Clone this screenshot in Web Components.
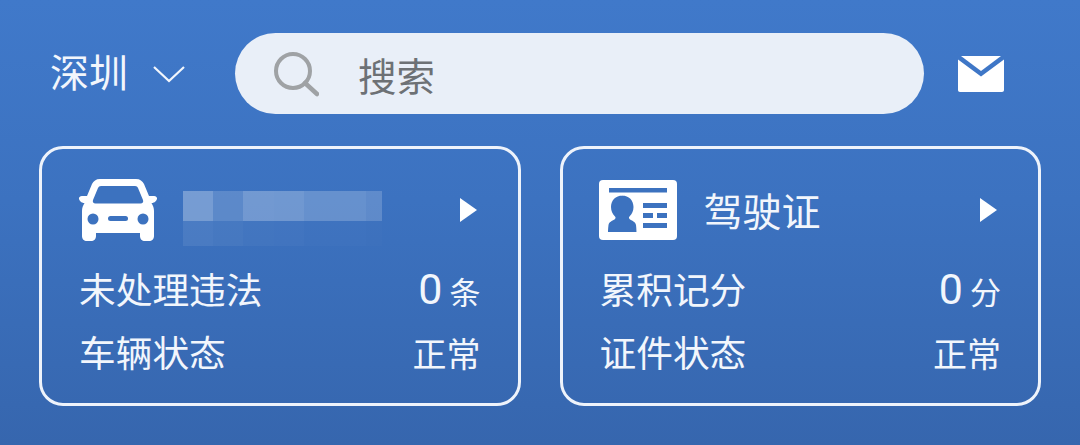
<!DOCTYPE html>
<html lang="zh">
<head>
<meta charset="utf-8">
<title>Home</title>
<style>
html, body { margin: 0; height: 445px; overflow: hidden; }
body {
    background: linear-gradient(180deg, #4079ca 0%, #3c72c0 45%, #3666ae 100%);
    font-family: "Liberation Sans", "Noto Sans CJK SC", sans-serif;
    color: #fff;
}
.cards { display: flex; gap: 39px; padding: 0 39px; }
</style>
</head>
<body>
<top-bar city="深圳" placeholder="搜索"></top-bar>
<div class="cards">
    <info-card>
        <svg slot="icon" width="80" height="64" viewBox="0 0 80 64"><path fill="#fff" d="M22 1h36c4 0 6.500 2 8 5l5 12h5c2 0 3.500 1.500 3 3s-2 4-5.500 4c1.500 2.500 2.500 5 2.500 8v25c0 3-2 5-5 5h-4c-3 0-5-2-5-5v-3H18v3c0 3-2 5-5 5H9c-3 0-5-2-5-5V33c0-3 1-5.500 2.500-8C3 25 1.500 22.500 1 21s1-3 3-3h5l5-12c1.500-3 4-5 8-5z"/><path fill="#3c72bf" d="M23 8h34c1.500 0 2.500.8 3 2l5 12c.7 2-.3 3.500-2.500 3.500h-45C15.300 25.500 14.300 24 15 22l5-12c.5-1.200 1.500-2 3-2z"/><circle cx="15" cy="41" r="5.500" fill="#3c72bf"/><circle cx="65" cy="41" r="5.500" fill="#3c72bf"/><rect x="30" y="38" width="20" height="5" rx="2.500" fill="#3c72bf"/></svg>
        <blur-plate slot="title"></blur-plate>
        <info-row label="未处理违法" value="0" unit="条"></info-row>
        <info-row label="车辆状态" value="正常"></info-row>
    </info-card>
    <info-card>
        <svg slot="icon" width="78" height="60" viewBox="0 0 78 60"><rect width="78" height="60" rx="4" fill="#fff"/><rect x="10" y="8" width="58" height="4.500" fill="#3c72bf"/><path fill="#3c72bf" d="M23 15.500c7 0 11.500 5 11.500 11.500 0 4-1.500 7-4 9.500-1 1-.5 2 .5 3 2.500 1.500 5.500 2.500 6 5.500.4 3 .5 7 .5 7H9s.1-4 .5-7c.5-3 3.500-4 6-5.500 1-1 1.500-2 .5-3-2.500-2.500-4-5.500-4-9.500 0-6.500 4.500-11.500 11.500-11.500z"/><rect x="44" y="23" width="24" height="5" fill="#3c72bf"/><rect x="44" y="33" width="10" height="5" fill="#3c72bf"/><rect x="58" y="33" width="10" height="5" fill="#3c72bf"/><rect x="44" y="43" width="24" height="5" fill="#3c72bf"/></svg>
        <span slot="title">驾驶证</span>
        <info-row label="累积记分" value="0" unit="分"></info-row>
        <info-row label="证件状态" value="正常"></info-row>
    </info-card>
</div>

<script>
class TopBar extends HTMLElement {
    constructor() {
        super();
        this.attachShadow({ mode: 'open' });
        this.shadowRoot.innerHTML = `
            <style>
                :host {
                    display: flex;
                    align-items: center;
                    height: 81px;
                    padding: 33px 76px 32px 50px;
                    font-family: "Liberation Sans", "Noto Sans CJK SC", sans-serif;
                }
                .city {
                    font-size: 39px;
                    line-height: 81px;
                    color: #f2f6fc;
                    width: 78px;
                    flex: none;
                }
                .chevron { margin-left: 24px; margin-right: 49px; flex: none; }
                .search {
                    flex: 1;
                    height: 81px;
                    display: flex;
                    align-items: center;
                    padding-left: 38px;
                    border-radius: 40.5px;
                    background: #e9eff8;
                    color: #6d7175;
                    font-size: 38.500px;
                }
                .search svg { margin-right: 39px; flex: none; }
                .mail { margin-left: 34px; flex: none; }
            </style>
            <span class="city">${this.getAttribute('city')}</span>
            <svg class="chevron" width="34" height="20" viewBox="0 0 34 20"><path d="M2 3l15 14L32 3" fill="none" stroke="#f2f6fc" stroke-width="2.200"/></svg>
            <div class="search">
                <svg width="46" height="46" viewBox="0 0 46 46"><circle cx="20" cy="20" r="17" fill="none" stroke="#9fa2a5" stroke-width="4"/><path d="M32 32l12 11" fill="none" stroke="#9fa2a5" stroke-width="4.500" stroke-linecap="round"/></svg>
                <span>${this.getAttribute('placeholder')}</span>
            </div>
            <svg class="mail" width="46" height="36" viewBox="0 0 46 36"><path fill="#fff" d="M3 0h40L23 15z"/><path fill="#fff" d="M0 3.500l23 17 23-17V34c0 1.200-.8 2-2 2H2c-1.200 0-2-.8-2-2z"/></svg>
        `;
    }
}

class BlurPlate extends HTMLElement {
    constructor() {
        super();
        this.attachShadow({ mode: 'open' });
        // mosaic over the hidden plate number
        const top = [[30, .3], [30, .17], [31, .28], [30, .27], [31, .22], [31, .22], [16, .18]];
        const bottom = [[30, .08], [30, .06], [31, .04], [30, .03], [31, .02], [31, .02], [16, .01]];
        const cells = row => row.map(c => `<i style="width:${c[0]}px;background:rgba(255,255,255,${c[1]})"></i>`).join('');
        this.shadowRoot.innerHTML = `
            <style>
                :host { display: block; width: 199px; margin-top: 16px; }
                .row { display: flex; }
                .row.a { height: 30px; }
                .row.b { height: 25px; }
                i { display: block; height: 100%; }
            </style>
            <div class="row a">${cells(top)}</div>
            <div class="row b">${cells(bottom)}</div>
        `;
    }
}

class InfoCard extends HTMLElement {
    constructor() {
        super();
        this.attachShadow({ mode: 'open' });
        this.shadowRoot.innerHTML = `
            <style>
                :host {
                    display: block;
                    flex: 1;
                    box-sizing: border-box;
                    height: 260px;
                    border: 3px solid #eef3fb;
                    border-radius: 24px;
                    padding: 0 37px;
                }
                .head {
                    display: flex;
                    align-items: center;
                    height: 94px;
                    padding-top: 14px;
                    font-size: 39px;
                    color: #f2f6fc;
                }
                .icon { display: flex; width: 104px; flex: none; margin-left: -1px; margin-right: 1px; }
                .title { flex: 1; display: flex; }
                ::slotted(span) { margin-top: -3px; }
                .arrow {
                    width: 0;
                    height: 0;
                    margin-right: 4px;
                    border-left: 17px solid #fff;
                    border-top: 12px solid transparent;
                    border-bottom: 12px solid transparent;
                }
            </style>
            <div class="head">
                <div class="icon"><slot name="icon"></slot></div>
                <div class="title"><slot name="title"></slot></div>
                <div class="arrow"></div>
            </div>
            <slot></slot>
        `;
    }
}

class InfoRow extends HTMLElement {
    constructor() {
        super();
        this.attachShadow({ mode: 'open' });
        const unit = this.getAttribute('unit');
        const value = this.getAttribute('value');
        this.shadowRoot.innerHTML = `
            <style>
                :host {
                    display: flex;
                    justify-content: space-between;
                    align-items: baseline;
                    height: 65px;
                    line-height: 65px;
                    font-size: 36.700px;
                    color: #f2f6fc;
                }
                .num { font-family: "Roboto", sans-serif; font-size: 43px; }
                .unit { font-size: 31px; margin-left: 7px; }
                .text { font-size: 34px; }
            </style>
            <span>${this.getAttribute('label')}</span>
            <span>${unit
                ? `<span class="num">${value}</span><span class="unit">${unit}</span>`
                : `<span class="text">${value}</span>`}</span>
        `;
    }
}

customElements.define('top-bar', TopBar);
customElements.define('blur-plate', BlurPlate);
customElements.define('info-card', InfoCard);
customElements.define('info-row', InfoRow);
</script>
</body>
</html>
